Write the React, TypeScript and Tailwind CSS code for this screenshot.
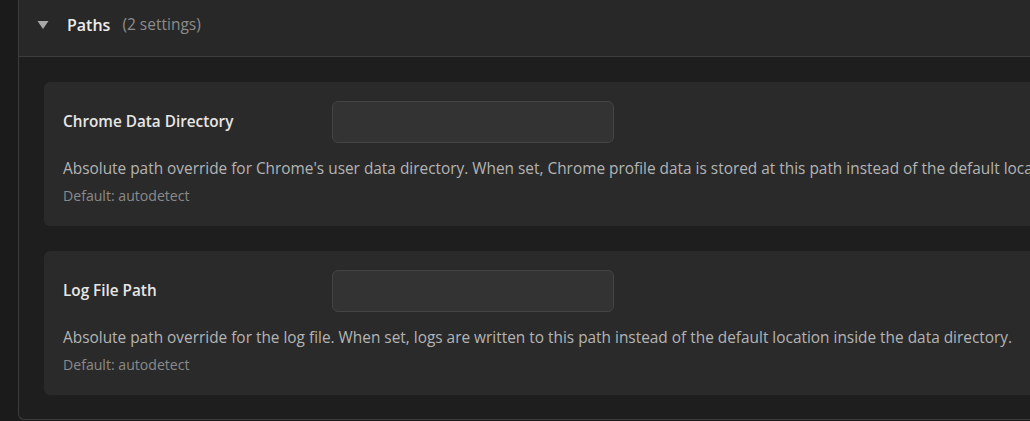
import React from "react";

type Setting = {
  label: string;
  description: string;
  defaultValue: string;
};

const settings: Setting[] = [
  {
    label: "Chrome Data Directory",
    description:
      "Absolute path override for Chrome's user data directory. When set, Chrome profile data is stored at this path instead of the default location inside the data directory.",
    defaultValue: "autodetect",
  },
  {
    label: "Log File Path",
    description:
      "Absolute path override for the log file. When set, logs are written to this path instead of the default location inside the data directory.",
    defaultValue: "autodetect",
  },
];

function SettingCard({ setting }: { setting: Setting }) {
  return (
    <div className="overflow-hidden rounded-md bg-[#2a2a2a] pl-[19px] pr-5 pt-[19px] pb-[20px]">
      <div className="flex items-center">
        <div className="mb-[2px] w-[269px] text-[15.3px] font-semibold text-[#e6e6e6]">{setting.label}</div>
        <input
          type="text"
          className="h-[42px] w-[282px] rounded-md border border-[#444444] bg-[#333333] px-3 text-[14px] text-[#e0e0e0] outline-none"
        />
      </div>
      <div className="mt-[16px] whitespace-nowrap text-[15.4px] leading-5 text-[#b4b4b4]">
        {setting.description}
      </div>
      <div className="mt-[7px] text-[14.1px] leading-5 text-[#8a8a8a]">Default: {setting.defaultValue}</div>
    </div>
  );
}

export default function App() {
  return (
    <div
      className="h-[421px] w-[1030px] overflow-hidden bg-[#1b1b1b] pl-[18px]"
      style={{ fontFamily: '"Segoe UI", "Open Sans", "Noto Sans", sans-serif' }}
    >
      <section className="w-[1100px] rounded-b-md border-b border-l border-[#3c3c3c] bg-[#1e1e1e]">
        <header className="flex h-[57px] items-center border-b border-[#3c3c3c] bg-[#282828] pb-[6px] pl-[18px]">
          <svg width="12" height="10" viewBox="0 0 12 10" className="mb-[1px] text-[#a8a8a8]">
            <path d="M0.5 1 L11.5 1 L6 9 Z" fill="currentColor" />
          </svg>
          <span className="ml-[18px] text-[16px] font-semibold text-[#ececec]">Paths</span>
          <span className="ml-[12px] text-[15.5px] text-[#8c8c8c]">(2 settings)</span>
        </header>
        <div className="flex flex-col gap-[25px] px-[25px] pt-[25px] pb-[24px]">
          {settings.map((s) => (
            <SettingCard key={s.label} setting={s} />
          ))}
        </div>
      </section>
    </div>
  );
}
